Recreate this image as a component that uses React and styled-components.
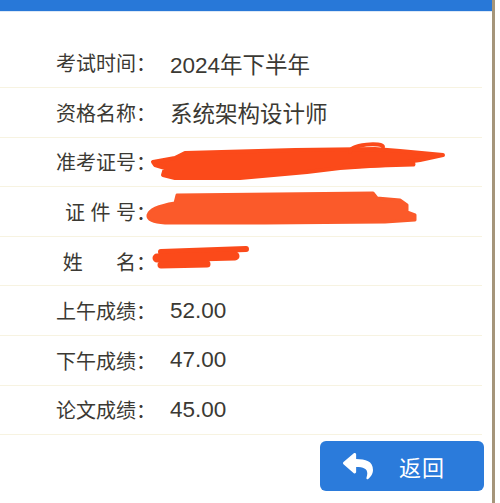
import React from 'react'
import styled, { createGlobalStyle } from 'styled-components'
import { FaReply } from 'react-icons/fa'

const GlobalStyle = createGlobalStyle`
  html, body {
    margin: 0;
    padding: 0;
    background: #fff;
  }
  body {
    font-family: "Liberation Sans", "Noto Sans CJK SC", sans-serif;
  }
`

const rows = [
  { label: '考试时间：', value: '2024年下半年' },
  { label: '资格名称：', value: '系统架构设计师' },
  { label: '准考证号：', redact: 'long' },
  { label: '证 件 号：', redact: 'mid' },
  { label: '姓\u00a0\u00a0\u00a0\u00a0\u00a0\u00a0名：', redact: 'short' },
  { label: '上午成绩：', value: '52.00' },
  { label: '下午成绩：', value: '47.00' },
  { label: '论文成绩：', value: '45.00' },
]

// hand-drawn redaction marks over the personal fields
const Scribble = ({ kind }) => {
  if (kind === 'long') {
    return (
      <Mark width="310" height="49" viewBox="0 0 310 49">
        <g fill="#fb4a1a" stroke="#fb4a1a" strokeLinejoin="round" strokeLinecap="round">
          <path
            d="M8 24 L30 20 L40 15 L150 12 L230 11 L255 13 L298 17 L275 22 L240 27 L195 30 L162 34 L95 40 L30 40 L18 37 L20 30 L10 27 Z"
            strokeWidth="4"
          />
          <path d="M205 14 C205 6 238 4 238 9" fill="none" strokeWidth="4" />
          <path d="M200 28 L268 26" fill="none" strokeWidth="5" />
        </g>
      </Mark>
    )
  }
  if (kind === 'mid') {
    return (
      <Mark width="310" height="49" viewBox="0 0 310 49">
        <g fill="#fb5a2a" stroke="#fb5a2a" strokeLinejoin="round" strokeLinecap="round">
          <path
            d="M32 8 L228 6 L232 11 L255 13 L262 18 L262 25 L270 28 L270 33 L240 35 L120 36 L20 36 Q2 35 3 28 Q5 20 30 16 Z"
            strokeWidth="3"
          />
        </g>
      </Mark>
    )
  }
  return (
    <Mark width="310" height="49" viewBox="0 0 310 49">
      <g stroke="#fb4a1a" strokeLinecap="round" fill="none">
        <path d="M16 15 L101 12" strokeWidth="6" />
        <path d="M12 21 L90 19" strokeWidth="9" />
        <path d="M16 28 L62 27" strokeWidth="7" />
      </g>
    </Mark>
  )
}

const App = () => {
  return (
    <>
      <GlobalStyle />
      <Page>
        <Main>
          <TopBar />
          <Content>
            <Table>
              {rows.map((r) => (
                <Row key={r.label}>
                  <Label>{r.label}</Label>
                  <Value>{r.value}</Value>
                  {r.redact && <Scribble kind={r.redact} />}
                </Row>
              ))}
            </Table>
            <Footer>
              <BackButton>
                <FaReply size={30} />
                <span>返回</span>
              </BackButton>
            </Footer>
          </Content>
        </Main>
      </Page>
    </>
  )
}

const Page = styled.div`
  width: 500px;
  height: 503px;
  overflow: hidden;
  background: #fff;
`

const Main = styled.div`
  width: 495px;
  height: 503px;
  box-sizing: border-box;
  border-right: 3px solid #a5957a;
`

const TopBar = styled.div`
  height: 11px;
  background: #2878d8;
  border-bottom: 1px solid #dce8f6;
`

const Content = styled.div`
  padding-top: 26.4px;
`

const Table = styled.div`
  width: 482px;
`

const Row = styled.div`
  position: relative;
  height: 48.6px;
  display: flex;
  align-items: center;
  border-bottom: 1px solid #f7f3e1;
  color: #3b3933;
`

const Label = styled.div`
  width: 156px;
  text-align: right;
  font-size: 20px;
  white-space: pre;
  flex-shrink: 0;
`

const Value = styled.div`
  margin-left: 14px;
  font-size: 22.5px;
`

const Mark = styled.svg`
  position: absolute;
  left: 145px;
  top: 0;
`

const Footer = styled.div`
  display: flex;
  justify-content: flex-end;
  padding: 6px 8px 0 0;
`

const BackButton = styled.button`
  width: 164px;
  height: 50px;
  border: none;
  border-radius: 6px;
  background: #2b7bdb;
  color: #fff;
  display: flex;
  align-items: center;
  padding: 0 0 0 23px;
  font-family: "Liberation Sans", "Noto Sans CJK SC", sans-serif;
  font-size: 22px;
  cursor: pointer;

  svg {
    flex-shrink: 0;
  }

  span {
    margin-left: 26px;
    letter-spacing: 1px;
  }
`

export default App
